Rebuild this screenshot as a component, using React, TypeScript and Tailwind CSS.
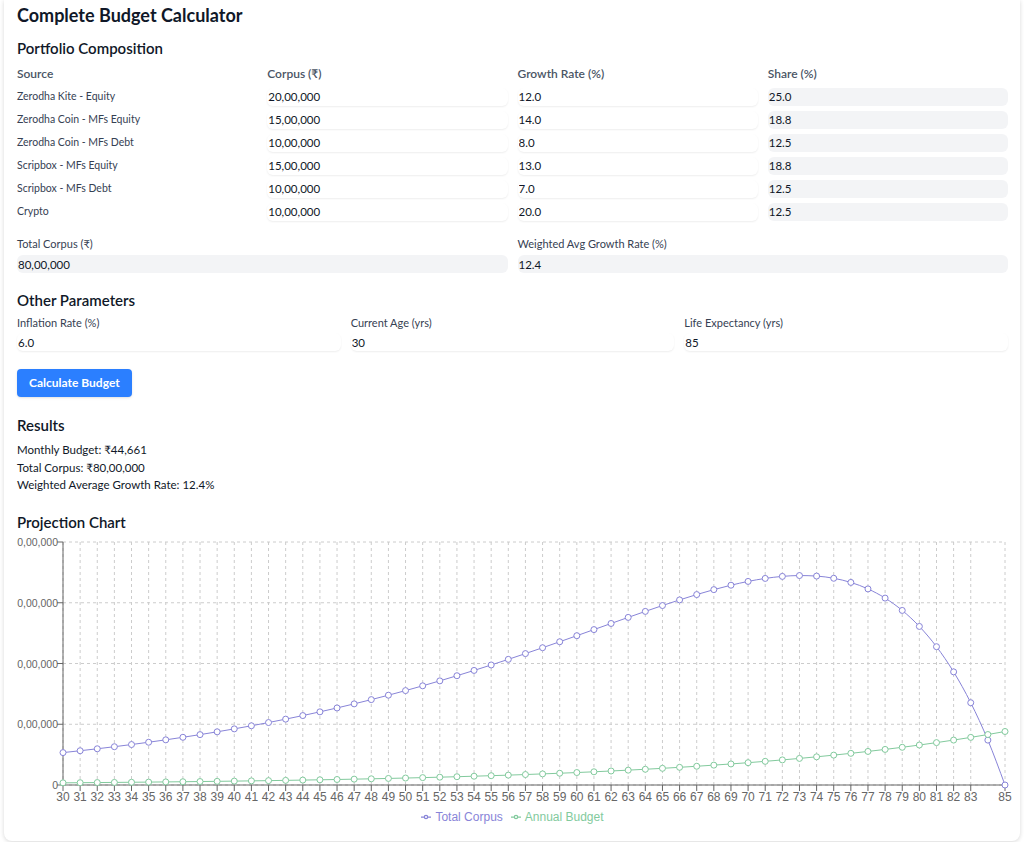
import React from 'react';

const FONT = { fontFamily: 'Lato, "Noto Sans", sans-serif' };

const sources = [
  { name: 'Zerodha Kite - Equity', corpus: '20,00,000', growth: '12.0', share: '25.0' },
  { name: 'Zerodha Coin - MFs Equity', corpus: '15,00,000', growth: '14.0', share: '18.8' },
  { name: 'Zerodha Coin - MFs Debt', corpus: '10,00,000', growth: '8.0', share: '12.5' },
  { name: 'Scripbox - MFs Equity', corpus: '15,00,000', growth: '13.0', share: '18.8' },
  { name: 'Scripbox - MFs Debt', corpus: '10,00,000', growth: '7.0', share: '12.5' },
  { name: 'Crypto', corpus: '10,00,000', growth: '20.0', share: '12.5' },
];

// projection: annuity paid at year end, budget grows with inflation
const RATE = 0.124375;
const INFL = 0.06;
const START = 30;
const END = 85;
const CORPUS = 8000000;

const buildData = () => {
  const n = END - START;
  const ratio = Math.pow((1 + INFL) / (1 + RATE), n);
  const b0 = (CORPUS * (RATE - INFL)) / (1 - ratio);
  const rows: { age: number; corpus: number; budget: number }[] = [];
  let c = CORPUS;
  for (let a = START; a <= END; a++) {
    const b = b0 * Math.pow(1 + INFL, a - START);
    rows.push({ age: a, corpus: Math.max(c, 0), budget: b });
    c = c * (1 + RATE) - b;
  }
  return rows;
};

const data = buildData();

const W = 1002;
const H = 272;
const X0 = 46;
const X1 = 988;
const Y0 = 7;
const Y1 = 250;
const MAX = 60000000;

const sx = (a: number) => X0 + ((a - START) / (END - START)) * (X1 - X0);
const sy = (v: number) => Y1 - (v / MAX) * (Y1 - Y0);

const sign = (v: number) => (v < 0 ? -1 : 1);

// d3 style monotoneX curve
const monotone = (pts: [number, number][]) => {
  const n = pts.length;
  const t: number[] = new Array(n).fill(0);
  for (let i = 1; i < n - 1; i++) {
    const [xa, ya] = pts[i - 1];
    const [xb, yb] = pts[i];
    const [xc, yc] = pts[i + 1];
    const h0 = xb - xa;
    const h1 = xc - xb;
    const s0 = (yb - ya) / h0;
    const s1 = (yc - yb) / h1;
    const p = (s0 * h1 + s1 * h0) / (h0 + h1);
    t[i] = (sign(s0) + sign(s1)) * Math.min(Math.abs(s0), Math.abs(s1), 0.5 * Math.abs(p)) || 0;
  }
  const s2 = (i: number, j: number, tt: number) => {
    const h = pts[j][0] - pts[i][0];
    return (3 * (pts[j][1] - pts[i][1])) / h - tt;
  };
  t[0] = s2(0, 1, t[1]) / 2;
  t[n - 1] = s2(n - 2, n - 1, t[n - 2]) / 2;
  let d = `M${pts[0][0]},${pts[0][1]}`;
  for (let i = 0; i < n - 1; i++) {
    const [xa, ya] = pts[i];
    const [xb, yb] = pts[i + 1];
    const dx = (xb - xa) / 3;
    d += `C${xa + dx},${ya + dx * t[i]},${xb - dx},${yb - dx * t[i + 1]},${xb},${yb}`;
  }
  return d;
};

const yTicks = [
  { v: 0, label: '0' },
  { v: 15000000, label: '1,50,00,000' },
  { v: 30000000, label: '3,00,00,000' },
  { v: 45000000, label: '4,50,00,000' },
  { v: 60000000, label: '6,00,00,000' },
];

const xTicks = data.map(d => d.age).filter(a => a !== 84);

const ProjectionChart: React.FC = () => {
  const corpusPts = data.map(d => [sx(d.age), sy(d.corpus)] as [number, number]);
  const budgetPts = data.map(d => [sx(d.age), sy(d.budget)] as [number, number]);
  return (
    <svg width={W} height={H} className="block overflow-hidden" style={{ fontFamily: '"Liberation Sans", sans-serif' }}>
      {/* grid */}
      <g stroke="#ccc" strokeDasharray="3 3" fill="none">
        {yTicks.map(t => (
          <line key={t.v} x1={X0} x2={X1} y1={sy(t.v)} y2={sy(t.v)} />
        ))}
        {xTicks.map(a => (
          <line key={a} x1={sx(a)} x2={sx(a)} y1={Y0} y2={Y1} />
        ))}
      </g>
      {/* axes */}
      <line x1={X0} x2={X1} y1={Y1} y2={Y1} stroke="#666" />
      <line x1={X0} x2={X0} y1={Y0} y2={Y1} stroke="#666" />
      {xTicks.map(a => (
        <g key={a}>
          <line x1={sx(a)} x2={sx(a)} y1={Y1} y2={Y1 + 6} stroke="#666" />
          <text x={sx(a)} y={Y1 + 16} textAnchor="middle" fontSize={12} fill="#666">
            {a}
          </text>
        </g>
      ))}
      {yTicks.map(t => (
        <g key={t.v}>
          <line x1={X0 - 6} x2={X0} y1={sy(t.v)} y2={sy(t.v)} stroke="#666" />
          <text x={X0 - 5} y={sy(t.v) + 4} textAnchor="end" fontSize={10.5} fill="#666">
            {t.label}
          </text>
        </g>
      ))}
      {/* series */}
      <path d={monotone(corpusPts)} fill="none" stroke="#8884d8" strokeWidth={1} />
      <path d={monotone(budgetPts)} fill="none" stroke="#82ca9d" strokeWidth={1} />
      {corpusPts.map(([x, y], i) => (
        <circle key={'c' + i} cx={x} cy={y} r={3} fill="#fff" stroke="#8884d8" />
      ))}
      {budgetPts.map(([x, y], i) => (
        <circle key={'b' + i} cx={x} cy={y} r={3} fill="#fff" stroke="#82ca9d" />
      ))}
    </svg>
  );
};

const LegendIcon: React.FC<{ color: string }> = ({ color }) => (
  <svg width={10} height={10} viewBox="0 0 32 32" className="mr-1">
    <path strokeWidth={4} fill="none" stroke={color} d="M0,16h10.667A5.333,5.333,0,1,1,21.333,16H32M21.333,16A5.333,5.333,0,1,1,10.667,16" />
  </svg>
);

const inputBase = 'block w-full h-[18px] px-px rounded-md text-[11.5px] text-gray-900 outline-none';
const editable = `${inputBase} bg-white shadow-[0_1px_2px_rgba(0,0,0,0.07)]`;
const readonly = `${inputBase} bg-gray-100`;

export default function App() {
  return (
    <div className="min-h-screen bg-white px-1" style={FONT}>
      <div className="rounded-b-lg bg-white shadow-[0_1px_4px_rgba(0,0,0,0.16)] pl-[13px] pr-3 pt-px pb-[14px]">
        <h1 className="text-lg leading-7 font-bold text-gray-900">Complete Budget Calculator</h1>

        {/* Portfolio */}
        <h2 className="mt-[7px] text-[15px] leading-6 font-semibold text-gray-900">Portfolio Composition</h2>
        <div className="mt-0.5 grid grid-cols-4 gap-x-2.5">
          <div className="h-[23px] flex items-center text-xs font-semibold text-gray-600">Source</div>
          <div className="h-[23px] flex items-center text-xs font-semibold text-gray-600">Corpus (₹)</div>
          <div className="h-[23px] flex items-center text-xs font-semibold text-gray-600">Growth Rate (%)</div>
          <div className="h-[23px] flex items-center text-xs font-semibold text-gray-600">Share (%)</div>
          {sources.map(s => (
            <React.Fragment key={s.name}>
              <div className="h-[23px] flex items-center text-[10.5px] text-gray-700">{s.name}</div>
              <div className="h-[23px] flex items-center">
                <input className={editable} defaultValue={s.corpus} />
              </div>
              <div className="h-[23px] flex items-center">
                <input className={editable} defaultValue={s.growth} />
              </div>
              <div className="h-[23px] flex items-center">
                <input className={readonly} value={s.share} readOnly />
              </div>
            </React.Fragment>
          ))}
        </div>

        <div className="mt-[13px] grid grid-cols-2 gap-x-2.5">
          <div>
            <label className="block text-[11px] leading-4 text-gray-700">Total Corpus (₹)</label>
            <input className={`${readonly} mt-[3px]`} value="80,00,000" readOnly />
          </div>
          <div>
            <label className="block text-[11px] leading-4 text-gray-700">Weighted Avg Growth Rate (%)</label>
            <input className={`${readonly} mt-[3px]`} value="12.4" readOnly />
          </div>
        </div>

        {/* Other parameters */}
        <h2 className="mt-[15px] text-[15px] leading-6 font-semibold text-gray-900">Other Parameters</h2>
        <div className="mt-[3px] grid grid-cols-3 gap-x-2.5">
          {[
            ['Inflation Rate (%)', '6.0'],
            ['Current Age (yrs)', '30'],
            ['Life Expectancy (yrs)', '85'],
          ].map(([l, v]) => (
            <div key={l}>
              <label className="block text-[11px] leading-4 text-gray-700">{l}</label>
              <input className={`${editable} mt-0.5`} defaultValue={v} />
            </div>
          ))}
        </div>

        <button className="mt-[18px] h-7 px-3 rounded bg-blue-500 text-white text-xs font-bold shadow-sm">
          Calculate Budget
        </button>

        {/* Results */}
        <h2 className="mt-4 text-[15px] leading-6 font-semibold text-gray-900">Results</h2>
        <div className="mt-1 text-[11.5px] leading-[17.5px] text-gray-900">
          <p>Monthly Budget: ₹44,661</p>
          <p>Total Corpus: ₹80,00,000</p>
          <p>Weighted Average Growth Rate: 12.4%</p>
        </div>

        <h2 className="mt-4 text-[15px] leading-6 font-semibold text-gray-900">Projection Chart</h2>
        <div className="mt-px">
          <ProjectionChart />
          <div className="h-5 flex items-center justify-center gap-2 text-xs" style={{ fontFamily: '"Liberation Sans", sans-serif' }}>
            <span className="flex items-center text-[#8884d8]">
              <LegendIcon color="#8884d8" />
              Total Corpus
            </span>
            <span className="flex items-center text-[#82ca9d]">
              <LegendIcon color="#82ca9d" />
              Annual Budget
            </span>
          </div>
        </div>
      </div>
    </div>
  );
}
